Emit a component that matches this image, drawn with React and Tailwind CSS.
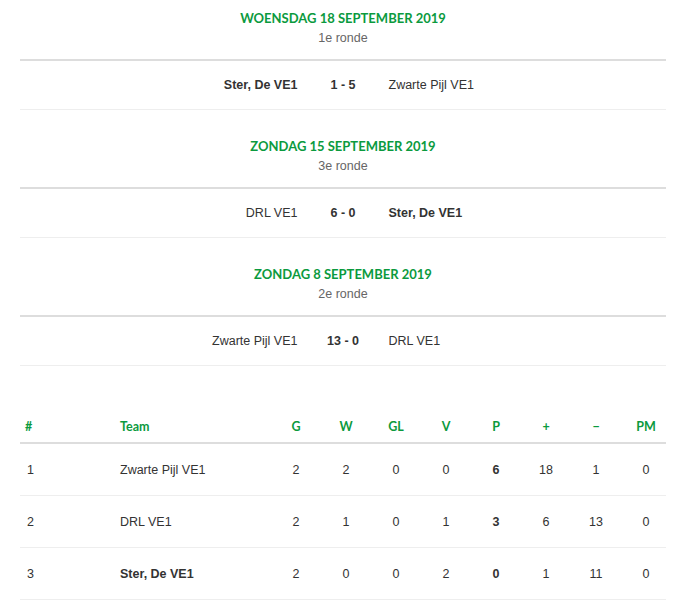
const matches = [
  {
    date: 'WOENSDAG 18 SEPTEMBER 2019',
    round: '1e ronde',
    home: 'Ster, De VE1',
    away: 'Zwarte Pijl VE1',
    score: '1 - 5',
    bold: 'home',
  },
  {
    date: 'ZONDAG 15 SEPTEMBER 2019',
    round: '3e ronde',
    home: 'DRL VE1',
    away: 'Ster, De VE1',
    score: '6 - 0',
    bold: 'away',
  },
  {
    date: 'ZONDAG 8 SEPTEMBER 2019',
    round: '2e ronde',
    home: 'Zwarte Pijl VE1',
    away: 'DRL VE1',
    score: '13 - 0',
    bold: null,
  },
]

const columns = ['G', 'W', 'GL', 'V', 'P', '+', '−', 'PM']

const standings = [
  { pos: 1, team: 'Zwarte Pijl VE1', stats: [2, 2, 0, 0, 6, 18, 1, 0] },
  { pos: 2, team: 'DRL VE1', stats: [2, 1, 0, 1, 3, 6, 13, 0] },
  { pos: 3, team: 'Ster, De VE1', stats: [2, 0, 0, 2, 0, 1, 11, 0], own: true },
]

const heading = "font-['Lato',sans-serif] font-bold text-[#0b9a3e]"

function MatchBlock({ match, first }) {
  return (
    <section className={first ? 'pt-[8px]' : 'mt-[26px]'}>
      <h2 className={`${heading} text-center text-[13px] leading-[20px]`}>{match.date}</h2>
      <p className="text-center text-[12.5px] leading-[20px] text-[#666]">{match.round}</p>
      <div className="mt-[11px] border-t-2 border-[#dddddd]" />
      <div className="flex h-[49px] items-center border-b border-[#eeeeee] text-[12.5px] text-[#333]">
        <span className={`flex-1 text-right ${match.bold === 'home' ? 'font-bold' : ''}`}>
          {match.home}
        </span>
        <span className="w-[91px] text-center font-bold">{match.score}</span>
        <span className={`flex-1 text-left ${match.bold === 'away' ? 'font-bold' : ''}`}>
          {match.away}
        </span>
      </div>
    </section>
  )
}

const grid = 'grid grid-cols-[92px_154px_repeat(8,50px)] items-center'

export default function App() {
  return (
    <div className="min-h-[601px] bg-white font-['Liberation_Sans',Arial,sans-serif]">
      <div className="mx-[20px] w-[646px]">
        {matches.map((m, i) => (
          <MatchBlock key={m.date} match={m} first={i === 0} />
        ))}

        <div className="mt-[43px]">
          <div className={`${grid} ${heading} h-[35px] border-b-2 border-[#dddddd] pt-[3px] text-[12.5px]`}>
            <span className="pl-[5px]">#</span>
            <span className="pl-[8px]">Team</span>
            {columns.map((c) => (
              <span key={c} className="pl-[10px] text-center">
                {c}
              </span>
            ))}
          </div>
          {standings.map((row) => (
            <div
              key={row.pos}
              className={`${grid} h-[52px] border-b border-[#eeeeee] pt-[2px] text-[12.5px] text-[#333]`}
            >
              <span className="pl-[7px]">{row.pos}</span>
              <span className={`pl-[8px] ${row.own ? 'font-bold' : ''}`}>{row.team}</span>
              {row.stats.map((s, i) => (
                <span key={i} className={`pl-[10px] text-center ${i === 4 ? 'font-bold' : ''}`}>
                  {s}
                </span>
              ))}
            </div>
          ))}
        </div>
      </div>
    </div>
  )
}
